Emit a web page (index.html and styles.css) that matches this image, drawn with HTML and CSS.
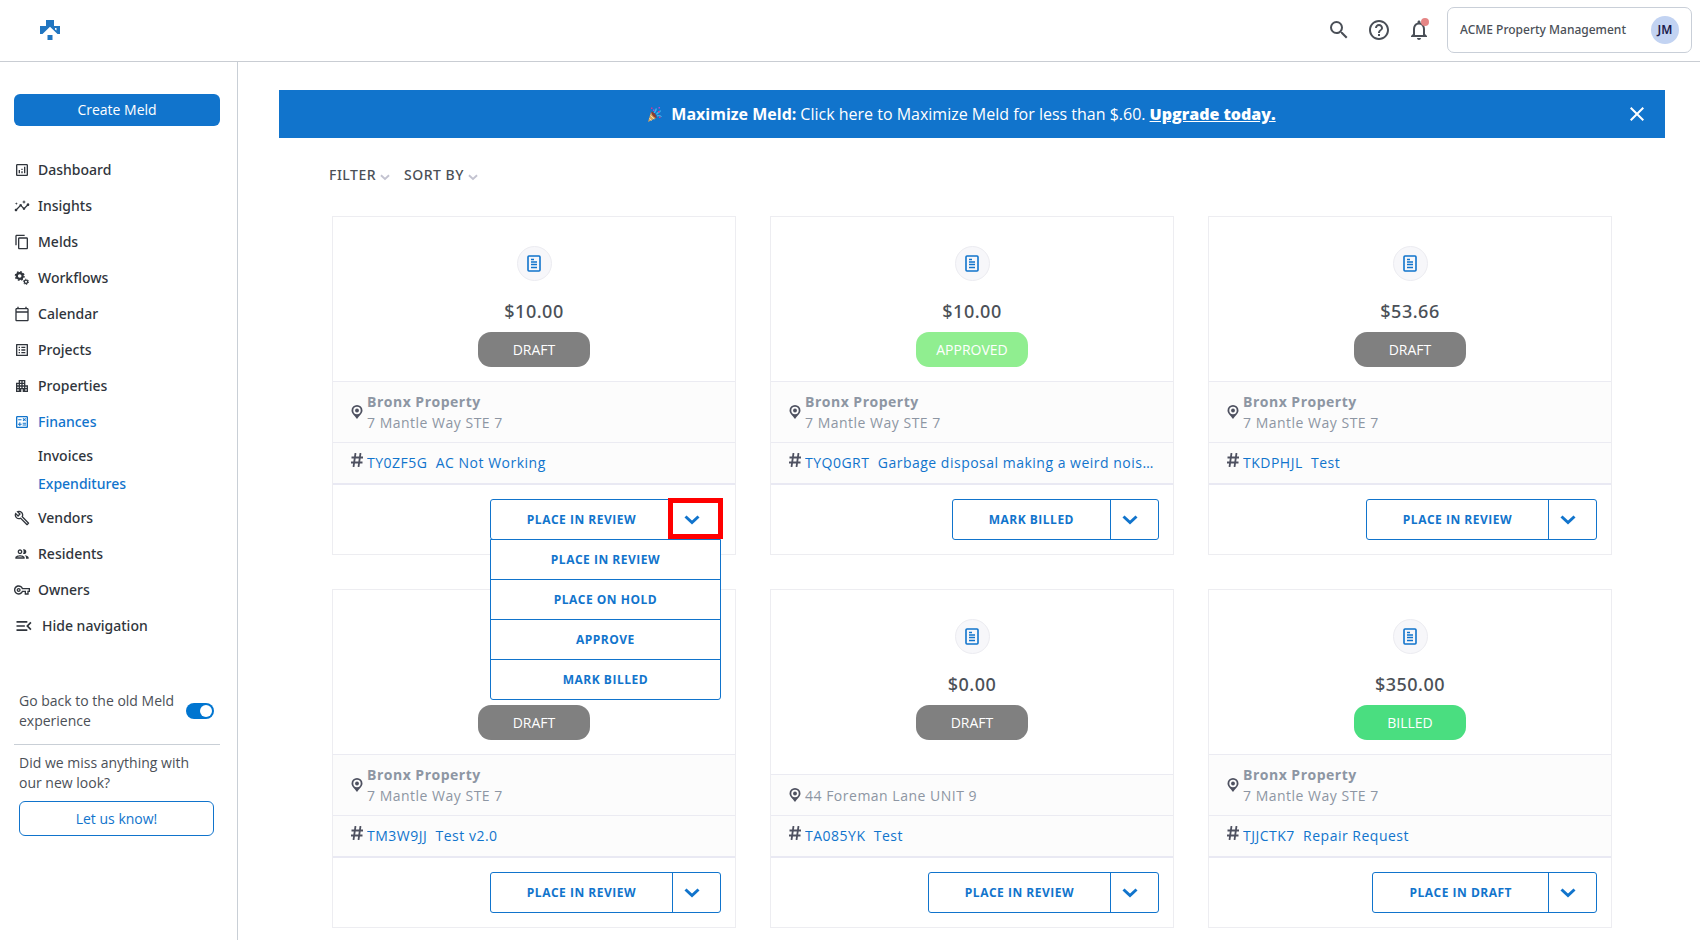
FILE: index.html
```html
<!DOCTYPE html>
<html lang="en">
	<head>
		<meta charset="UTF-8">
		<title>Expenditures</title>

		<link rel="stylesheet" href="styles.css">
	</head>

	<body>
		<svg class="symbols" aria-hidden="true">
			<symbol id="i-receipt" viewBox="0 0 14 18">
				<rect x="1" y="1" width="12" height="15" rx="1" fill="none" stroke="currentColor" stroke-width="1.6"/>
				<path d="M4 4.5h3M4 7h6M4 9.5h6M4 12.5h6" fill="none" stroke="currentColor" stroke-width="1.4"/>
			</symbol>
			<symbol id="i-pin" viewBox="0 0 12 14">
				<path fill-rule="evenodd" d="M6 0a5.500 5.500 0 0 0-5.500 5.500C.5 8.500 3.500 10.500 6 14c2.500-3.500 5.500-5.500 5.500-8.500A5.500 5.500 0 0 0 6 0zm0 1.800a3.700 3.700 0 1 1 0 7.400 3.700 3.700 0 0 1 0-7.400z" fill="currentColor"/>
				<circle cx="6" cy="5.500" r="1.900" fill="currentColor"/>
			</symbol>
			<symbol id="i-hash" viewBox="0 0 12 14">
				<path d="M4.500 0L2.500 14M9.500 0L7.500 14M.5 4.500H12M0 9.500h11.500" fill="none" stroke="currentColor" stroke-width="1.800"/>
			</symbol>
			<symbol id="i-chevron" viewBox="0 0 16 10">
				<path d="M1.500 1.500L8 7.500l6.500-6" fill="none" stroke="currentColor" stroke-width="3"/>
			</symbol>
		</svg>

		<header class="topbar">
			<a href="#" class="logo" aria-label="Home">
				<svg width="20" height="20" viewBox="0 0 20 20">
					<path d="M6 0h8v6h6v8h-2.500L10 6.800 2.500 14H0V6h6z" fill="#2176c1"/>
					<path d="M15 8h1.500v2.500L15 9.500z" fill="#fff"/>
					<rect x="7.500" y="15" width="5" height="5" fill="#2176c1"/>
				</svg>
			</a>
			<div class="tools">
				<button type="button" class="icon_button" aria-label="Search">
					<svg width="24" height="24" viewBox="0 0 24 24"><path d="M15.500 14h-.79l-.28-.27A6.471 6.471 0 0 0 16 9.500 6.500 6.500 0 1 0 9.500 16c1.610 0 3.090-.59 4.230-1.570l.27.28v.79l5 4.990L20.490 19l-4.990-5zm-6 0C7.010 14 5 11.990 5 9.500S7.010 5 9.500 5 14 7.010 14 9.500 11.990 14 9.500 14z"/></svg>
				</button>
				<button type="button" class="icon_button" aria-label="Help">
					<svg width="24" height="24" viewBox="0 0 24 24"><path d="M11 18h2v-2h-2v2zm1-16C6.480 2 2 6.480 2 12s4.480 10 10 10 10-4.480 10-10S17.520 2 12 2zm0 18c-4.410 0-8-3.590-8-8s3.590-8 8-8 8 3.590 8 8-3.590 8-8 8zm0-14c-2.210 0-4 1.790-4 4h2c0-1.100.9-2 2-2s2 .9 2 2c0 2-3 1.750-3 5h2c0-2.250 3-2.500 3-5 0-2.210-1.790-4-4-4z"/></svg>
				</button>
				<button type="button" class="icon_button bell" aria-label="Notifications">
					<svg width="24" height="24" viewBox="0 0 24 24"><path d="M12 22c1.100 0 2-.9 2-2h-4c0 1.100.9 2 2 2zm6-6v-5c0-3.070-1.630-5.640-4.500-6.320V4c0-.83-.67-1.500-1.500-1.500s-1.500.67-1.500 1.500v.68C7.640 5.360 6 7.920 6 11v5l-2 2v1h16v-1l-2-2zm-2 1H8v-6c0-2.480 1.510-4.500 4-4.500s4 2.020 4 4.500v6z"/></svg>
				</button>
				<button type="button" class="account">
					<span>ACME Property Management</span>
					<span class="avatar">JM</span>
				</button>
			</div>
		</header>

		<div class="page">
			<aside class="sidebar">
				<button type="button" class="create">Create Meld</button>

				<nav>
					<ul class="menu">
						<li><a href="#">
							<svg width="16" height="16" viewBox="0 0 24 24"><path d="M19 3H5c-1.100 0-2 .9-2 2v14c0 1.100.9 2 2 2h14c1.100 0 2-.9 2-2V5c0-1.100-.9-2-2-2zm0 16H5V5h14v14zM7 12h2v5H7zM15 7h2v10h-2zM11 14h2v3h-2zM11 10h2v2h-2z"/></svg>
							Dashboard
						</a></li>
						<li><a href="#">
							<svg width="16" height="16" viewBox="0 0 24 24"><path d="M21 8c-1.450 0-2.260 1.440-1.930 2.510l-3.550 3.560c-.3-.09-.74-.09-1.040 0l-2.550-2.550C12.270 10.450 11.460 9 10 9c-1.450 0-2.270 1.440-1.930 2.520l-4.560 4.550C2.440 15.740 1 16.550 1 18c0 1.100.9 2 2 2 1.450 0 2.260-1.440 1.930-2.510l4.550-4.560c.3.09.74.09 1.040 0l2.550 2.550C12.730 16.550 13.540 18 15 18c1.450 0 2.270-1.440 1.930-2.520l3.560-3.550C21.560 12.260 23 11.450 23 10c0-1.100-.9-2-2-2zM15 9l.94-2.070L18 6l-2.060-.93L15 3l-.92 2.070L12 6l2.080.93zM3.500 11L4 9l2-.5L4 8l-.5-2L3 8l-2 .5L3 9z"/></svg>
							Insights
						</a></li>
						<li><a href="#">
							<svg width="16" height="16" viewBox="0 0 24 24"><path d="M16 1H4c-1.100 0-2 .9-2 2v14h2V3h12V1zm3 4H8c-1.100 0-2 .9-2 2v14c0 1.100.9 2 2 2h11c1.100 0 2-.9 2-2V7c0-1.100-.9-2-2-2zm0 16H8V7h11v14z"/></svg>
							Melds
						</a></li>
						<li><a href="#">
							<svg width="16" height="16" viewBox="0 0 16 16">
								<g fill="none" stroke="currentColor">
									<circle cx="5.700" cy="6" r="2.900" stroke-width="2.200"/>
									<circle cx="5.700" cy="6" r="4.300" stroke-width="1.400" stroke-dasharray="1.700 1.677"/>
									<circle cx="12" cy="11.800" r="1.700" stroke-width="1.300"/>
									<circle cx="12" cy="11.800" r="2.600" stroke-width="1" stroke-dasharray="1.300 1.422"/>
								</g>
							</svg>
							Workflows
						</a></li>
						<li><a href="#">
							<svg width="16" height="16" viewBox="0 0 24 24"><path d="M20 3h-1V1h-2v2H7V1H5v2H4c-1.100 0-2 .9-2 2v16c0 1.100.9 2 2 2h16c1.100 0 2-.9 2-2V5c0-1.100-.9-2-2-2zm0 18H4V10h16v11zm0-13H4V5h16v3z"/></svg>
							Calendar
						</a></li>
						<li><a href="#">
							<svg width="16" height="16" viewBox="0 0 24 24"><path d="M19 5v14H5V5h14m1.100-2H3.900c-.5 0-.9.4-.9.9v16.200c0 .4.4.9.9.9h16.200c.4 0 .9-.5.9-.9V3.900c0-.5-.5-.9-.9-.9zM11 7h6v2h-6V7zm0 4h6v2h-6v-2zm0 4h6v2h-6zM7 7h2v2H7zm0 4h2v2H7zm0 4h2v2H7z"/></svg>
							Projects
						</a></li>
						<li><a href="#">
							<svg width="16" height="16" viewBox="0 0 24 24"><path d="M17 11V3H7v4H3v14h8v-4h2v4h8V11h-4zM7 19H5v-2h2v2zm0-4H5v-2h2v2zm0-4H5V9h2v2zm4 4H9v-2h2v2zm0-4H9V9h2v2zm0-4H9V5h2v2zm4 8h-2v-2h2v2zm0-4h-2V9h2v2zm0-4h-2V5h2v2zm4 12h-2v-2h2v2zm0-4h-2v-2h2v2z"/></svg>
							Properties
						</a></li>
						<li>
							<a href="#" class="active">
								<svg width="16" height="16" viewBox="0 0 24 24"><path d="M19 3H5c-1.100 0-2 .9-2 2v14c0 1.100.9 2 2 2h14c1.100 0 2-.9 2-2V5c0-1.100-.9-2-2-2zm0 16H5V5h14v14zM6.250 7.720h5v1.500h-5zM13 15.750h5v1.500h-5zM13 13.250h5v1.500h-5zM8 18h1.500v-2h2v-1.500h-2v-2H8v2H6V16h2zM14.090 10.950l1.410-1.410 1.410 1.410 1.060-1.060-1.410-1.420 1.410-1.410L16.910 6 15.500 7.410 14.090 6l-1.060 1.060 1.410 1.410-1.410 1.420z"/></svg>
								Finances
							</a>
							<ul class="submenu">
								<li><a href="#">Invoices</a></li>
								<li><a href="#" class="active">Expenditures</a></li>
							</ul>
						</li>
						<li><a href="#">
							<svg width="16" height="16" viewBox="0 0 24 24"><path d="M22.610 18.990l-9.080-9.080c.93-2.340.45-5.100-1.440-7C9.790.61 6.210.4 3.660 2.260L7.500 6.110 6.080 7.520 2.250 3.690C.39 6.230.6 9.820 2.900 12.110c1.860 1.860 4.570 2.350 6.890 1.480l9.110 9.110c.39.39 1.020.39 1.410 0l2.300-2.300c.4-.38.4-1.010 0-1.410zm-3 1.600l-9.460-9.460c-.61.45-1.290.72-2 .82-1.360.2-2.790-.21-3.830-1.250C3.370 9.760 2.930 8.500 3 7.260l3.090 3.090 4.240-4.240-3.090-3.090c1.240-.07 2.490.37 3.440 1.310 1.080 1.080 1.490 2.570 1.240 3.960-.12.71-.42 1.370-.88 1.960l9.450 9.450-.88.89z"/></svg>
							Vendors
						</a></li>
						<li><a href="#">
							<svg width="16" height="16" viewBox="0 0 24 24"><path d="M9 13.750c-2.340 0-7 1.170-7 3.500V19h14v-1.750c0-2.330-4.660-3.500-7-3.500zM4.340 17c.84-.58 2.870-1.250 4.660-1.250s3.820.67 4.660 1.250H4.340zM9 12c1.930 0 3.500-1.570 3.500-3.500S10.930 5 9 5 5.500 6.570 5.500 8.500 7.070 12 9 12zm0-5c.83 0 1.500.67 1.500 1.500S9.830 10 9 10s-1.500-.67-1.500-1.500S8.170 7 9 7zm7.040 6.810c1.160.84 1.960 1.960 1.960 3.440V19h4v-1.750c0-2.020-3.500-3.170-5.960-3.440zM15 12c1.930 0 3.500-1.570 3.500-3.500S16.930 5 15 5c-.54 0-1.040.13-1.500.35.63.89 1 1.980 1 3.150s-.37 2.260-1 3.150c.46.22.96.35 1.500.35z"/></svg>
							Residents
						</a></li>
						<li><a href="#">
							<svg width="16" height="16" viewBox="0 0 24 24"><path d="M22 19h-6v-4h-2.680c-1.140 2.420-3.600 4-6.320 4-3.860 0-7-3.140-7-7s3.140-7 7-7c2.720 0 5.170 1.580 6.320 4H24v6h-2v4zm-4-2h2v-4h2v-2H11.940l-.23-.67C11.010 8.340 9.110 7 7 7c-2.760 0-5 2.240-5 5s2.240 5 5 5c2.110 0 4.010-1.340 4.710-3.330l.23-.67H18v4zM7 15c-1.650 0-3-1.350-3-3s1.350-3 3-3 3 1.350 3 3-1.350 3-3 3zm0-4c-.55 0-1 .45-1 1s.45 1 1 1 1-.45 1-1-.45-1-1-1z"/></svg>
							Owners
						</a></li>
						<li><a href="#">
							<svg width="20" height="20" viewBox="0 0 24 24"><path d="M3 18h13v-2H3v2zm0-5h10v-2H3v2zm0-7v2h13V6H3zm18 9.590L17.420 12 21 8.410 19.590 7l-5 5 5 5L21 15.590z"/></svg>
							Hide navigation
						</a></li>
					</ul>
				</nav>

				<div class="switch">
					<label for="old">Go back to the old Meld experience</label>
					<input type="checkbox" id="old" checked>
				</div>
				<div class="feedback">
					<p>Did we miss anything with our new look?</p>
					<button type="button">Let us know!</button>
				</div>
			</aside>

			<main>
				<div class="banner">
					<p>
						<svg width="16" height="16" viewBox="0 0 14 16">
							<path d="M3 6l5 6-8 4z" fill="#d9a35b"/>
							<path d="M3.500 5.500C6 6 8.500 9 8.500 12 5.500 11.500 3 8.500 3.500 5.500z" fill="#8c3b32"/>
							<path d="M2.300 9.500l4 3.500M1.300 12.500l2.200 2" stroke="#f4e3b0" fill="none"/>
							<path d="M6.500 7c0-2 2-2 1.500-4.500M8.500 8.500c1-2.500 3-1.500 4-4" stroke="#3cb4f0" stroke-width="1.500" fill="none"/>
							<path d="M3 1.500h1.500v1.500H3zM10 5h1.500v1.500H10zM11 10.500h1.500V12H11z" fill="#e0318c"/>
							<path d="M5 3.500h1.500V5H5zM10.500 1H12v1.500h-1.500z" fill="#b04bd0"/>
							<path d="M9 10c1.500-.5 3-.5 4.500.5" stroke="#58c8f4" fill="none"/>
						</svg>
						<b>Maximize Meld:</b> Click here to Maximize Meld for less than $.60. <a href="#">Upgrade today.</a>
					</p>
					<button type="button" aria-label="Close">
						<svg width="14" height="14" viewBox="0 0 14 14"><path d="M.7.7l12.600 12.600M13.300.7L.7 13.300" stroke="currentColor" stroke-width="2"/></svg>
					</button>
				</div>

				<div class="filters">
					<button type="button">FILTER <svg width="10" height="7"><use href="#i-chevron"/></svg></button>
					<button type="button">SORT BY <svg width="10" height="7"><use href="#i-chevron"/></svg></button>
				</div>

				<div class="cards">
					<article class="card">
						<div class="summary">
							<span class="receipt"><svg width="14" height="18"><use href="#i-receipt"/></svg></span>
							<p class="amount">$10.00</p>
							<span class="status">DRAFT</span>
						</div>
						<div class="row place">
							<svg width="12" height="14"><use href="#i-pin"/></svg>
							<p><b>Bronx Property</b><br>7 Mantle Way STE 7</p>
						</div>
						<div class="row meld">
							<svg width="12" height="14"><use href="#i-hash"/></svg>
							<a href="#">TY0ZF5G&nbsp; AC Not Working</a>
						</div>
						<div class="actions">
							<div class="split open">
								<button type="button" class="action">PLACE IN REVIEW</button>
								<button type="button" class="more" aria-label="More actions" aria-expanded="true"><svg width="16" height="10"><use href="#i-chevron"/></svg></button>
								<div class="dropdown">
									<button type="button">PLACE IN REVIEW</button>
									<button type="button">PLACE ON HOLD</button>
									<button type="button">APPROVE</button>
									<button type="button">MARK BILLED</button>
								</div>
							</div>
						</div>
					</article>

					<article class="card">
						<div class="summary">
							<span class="receipt"><svg width="14" height="18"><use href="#i-receipt"/></svg></span>
							<p class="amount">$10.00</p>
							<span class="status approved">APPROVED</span>
						</div>
						<div class="row place">
							<svg width="12" height="14"><use href="#i-pin"/></svg>
							<p><b>Bronx Property</b><br>7 Mantle Way STE 7</p>
						</div>
						<div class="row meld">
							<svg width="12" height="14"><use href="#i-hash"/></svg>
							<a href="#">TYQ0GRT&nbsp; Garbage disposal making a weird nois...</a>
						</div>
						<div class="actions">
							<div class="split">
								<button type="button" class="action">MARK BILLED</button>
								<button type="button" class="more" aria-label="More actions"><svg width="16" height="10"><use href="#i-chevron"/></svg></button>
							</div>
						</div>
					</article>

					<article class="card">
						<div class="summary">
							<span class="receipt"><svg width="14" height="18"><use href="#i-receipt"/></svg></span>
							<p class="amount">$53.66</p>
							<span class="status">DRAFT</span>
						</div>
						<div class="row place">
							<svg width="12" height="14"><use href="#i-pin"/></svg>
							<p><b>Bronx Property</b><br>7 Mantle Way STE 7</p>
						</div>
						<div class="row meld">
							<svg width="12" height="14"><use href="#i-hash"/></svg>
							<a href="#">TKDPHJL&nbsp; Test</a>
						</div>
						<div class="actions">
							<div class="split">
								<button type="button" class="action">PLACE IN REVIEW</button>
								<button type="button" class="more" aria-label="More actions"><svg width="16" height="10"><use href="#i-chevron"/></svg></button>
							</div>
						</div>
					</article>

					<article class="card">
						<div class="summary">
							<span class="receipt"><svg width="14" height="18"><use href="#i-receipt"/></svg></span>
							<p class="amount">&nbsp;</p>
							<span class="status">DRAFT</span>
						</div>
						<div class="row place">
							<svg width="12" height="14"><use href="#i-pin"/></svg>
							<p><b>Bronx Property</b><br>7 Mantle Way STE 7</p>
						</div>
						<div class="row meld">
							<svg width="12" height="14"><use href="#i-hash"/></svg>
							<a href="#">TM3W9JJ&nbsp; Test v2.0</a>
						</div>
						<div class="actions">
							<div class="split">
								<button type="button" class="action">PLACE IN REVIEW</button>
								<button type="button" class="more" aria-label="More actions"><svg width="16" height="10"><use href="#i-chevron"/></svg></button>
							</div>
						</div>
					</article>

					<article class="card">
						<div class="summary">
							<span class="receipt"><svg width="14" height="18"><use href="#i-receipt"/></svg></span>
							<p class="amount">$0.00</p>
							<span class="status">DRAFT</span>
						</div>
						<div class="row place">
							<svg width="12" height="14"><use href="#i-pin"/></svg>
							<p>44 Foreman Lane UNIT 9</p>
						</div>
						<div class="row meld">
							<svg width="12" height="14"><use href="#i-hash"/></svg>
							<a href="#">TA085YK&nbsp; Test</a>
						</div>
						<div class="actions">
							<div class="split">
								<button type="button" class="action">PLACE IN REVIEW</button>
								<button type="button" class="more" aria-label="More actions"><svg width="16" height="10"><use href="#i-chevron"/></svg></button>
							</div>
						</div>
					</article>

					<article class="card">
						<div class="summary">
							<span class="receipt"><svg width="14" height="18"><use href="#i-receipt"/></svg></span>
							<p class="amount">$350.00</p>
							<span class="status billed">BILLED</span>
						</div>
						<div class="row place">
							<svg width="12" height="14"><use href="#i-pin"/></svg>
							<p><b>Bronx Property</b><br>7 Mantle Way STE 7</p>
						</div>
						<div class="row meld">
							<svg width="12" height="14"><use href="#i-hash"/></svg>
							<a href="#">TJJCTK7&nbsp; Repair Request</a>
						</div>
						<div class="actions">
							<div class="split">
								<button type="button" class="action">PLACE IN DRAFT</button>
								<button type="button" class="more" aria-label="More actions"><svg width="16" height="10"><use href="#i-chevron"/></svg></button>
							</div>
						</div>
					</article>
				</div>
			</main>
		</div>
	</body>
</html>
```

FILE: styles.css
```css
*, *::before, *::after {
    box-sizing: border-box;
}

body {
    margin: 0;
    min-height: 100vh;
    display: flex; flex-direction: column;
    font-family: "Open Sans", "Noto Sans", sans-serif;
    font-size: 14px;
    line-height: 20px;
    color: #4b5057;
    background: #fff;
}

p, ul {
    margin: 0; padding: 0;
    list-style: none;
}

a {
    color: inherit;
    text-decoration: none;
}

button {
    padding: 0;
    border: 0;
    background: none;
    font: inherit;
    letter-spacing: inherit;
    color: inherit;
    cursor: pointer;
}

svg {
    flex: none;
    display: block;
    fill: currentColor;
}

svg.symbols {
    position: absolute;
    width: 0; height: 0;
}

/* top bar */

.topbar {
    height: 62px;
    padding: 0 8px 1px 40px;
    border-bottom: 1px solid #c9cdd3;
    display: flex;
    align-items: center;
    justify-content: space-between;
}

.tools {
    display: flex;
    align-items: center;
    gap: 16px;
    color: #4a4f57;
}

.bell {
    position: relative;
}

.bell::after {
    content: "";
    position: absolute; top: 0; right: 2px;
    width: 8px; height: 8px;
    border-radius: 50%;
    background: #e58585;
}

.account {
    height: 46px;
    padding: 0 12px;
    border: 1px solid #c9cfd8;
    border-radius: 7px;
    display: flex;
    align-items: center;
    gap: 25px;
    font-family: "Noto Sans", sans-serif;
    font-size: 12px;
    font-weight: 500;
}

.avatar {
    width: 28px;
    border-radius: 50%;
    background: #c2d3f2;
    color: #1c1a4b;
    font-weight: 600;
    line-height: 28px;
    text-align: center;
}

/* side bar */

.page {
    flex: 1;
    display: flex;
}

.sidebar {
    flex: none;
    width: 238px;
    padding: 32px 17px 0 14px;
    border-right: 1px solid #c9cfd6;
}

.create {
    width: 100%;
    height: 32px;
    border-radius: 6px;
    background: #1174cc;
    color: #fff;
}

.menu {
    margin-top: 26px;
    color: #30353c;
    font-family: "Noto Sans", sans-serif;
    font-weight: 500;
}

.menu a {
    height: 36px;
    display: flex;
    align-items: center;
    gap: 8px;
}

.menu a.active {
    color: #1174cc;
}

.submenu {
    padding: 2px 0 2px 24px;
}

.submenu a {
    height: 28px;
}

.switch {
    margin-top: 47px;
    padding: 0 6px 13px 5px;
    border-bottom: 1px solid #c9cfd6;
    display: flex;
    align-items: center;
    justify-content: space-between;
}

.switch label {
    flex: 0 1 160px;
}

.switch input {
    appearance: none;
    flex: none;
    width: 28px; height: 16px;
    margin: 0; padding: 2px;
    border-radius: 8px;
    background: #9aa1ab;
}

.switch input::before {
    content: "";
    display: block;
    width: 12px; height: 12px;
    border-radius: 50%;
    background: #fff;
}

.switch input:checked {
    background: #0075d0;
}

.switch input:checked::before {
    margin-left: auto;
}

.feedback {
    padding: 8px 6px 0 5px;
}

.feedback button {
    width: 100%;
    height: 35px;
    margin-top: 8px;
    border: 1px solid #1174cc;
    border-radius: 6px;
    color: #1174cc;
}

/* content */

main {
    flex: 1;
    min-width: 0;
    padding: 28px 35px 11px 41px;
}

.banner {
    height: 48px;
    padding: 0 21px 0 14px;
    background: #1174cc;
    color: #fff;
    font-size: 16px;
    display: flex;
    align-items: center;
}

.banner p {
    flex: 1;
    display: flex;
    align-items: center;
    justify-content: center;
    gap: 4px;
}

.banner p svg {
    margin-right: 4px;
}

.banner a {
    font-weight: 800;
    text-decoration: underline;
}

.filters {
    padding: 27px 50px 0;
    display: flex;
    gap: 14px;
    font-family: "Noto Sans", sans-serif;
    font-weight: 500;
    letter-spacing: .5px;
}

.filters button {
    display: flex;
    align-items: center;
    gap: 4px;
}

.filters svg {
    margin-top: 4px;
    color: #c3c3d0;
}

.cards {
    margin: 31px 53px 0;
    display: grid;
    grid-template-columns: repeat(3, minmax(0, 1fr));
    gap: 34px;
}

.card {
    border: 1px solid #ededf1;
    background: #fff;
    display: flex; flex-direction: column;
}

.summary {
    flex: 1;
    padding: 29px 0 14px;
    display: flex; flex-direction: column;
    align-items: center;
}

.receipt {
    width: 35px; height: 35px;
    border: 1px solid #ececf1;
    border-radius: 50%;
    background: #f7f7fa;
    color: #1174cc;
    display: flex;
    align-items: center;
    justify-content: center;
}

.amount {
    margin: 18px 0 9px;
    font-family: "Noto Sans", sans-serif;
    font-size: 18px;
    font-weight: 500;
    line-height: 24px;
    letter-spacing: .5px;
}

.status {
    width: 112px;
    border-radius: 13px;
    background: #808080;
    color: #fff;
    line-height: 35px;
    text-align: center;
}

.status.approved {
    background: #90ee90;
}

.status.billed {
    background: #4ade80;
}

.row {
    padding: 0 18px;
    border-top: 1px solid #ebebf2;
    background: #fcfcfc;
    display: flex;
    gap: 4px;
    letter-spacing: .5px;
}

.row svg {
    color: #4e5160;
}

.place {
    min-height: 41px;
    padding-top: 9px;
    padding-bottom: 9px;
    align-items: center;
    color: #8d96a3;
    line-height: 21px;
}

.meld {
    padding-top: 10px;
    padding-bottom: 10px;
    border-bottom: 2px solid #e9e9f3;
    color: #1174cc;
}

.meld a {
    overflow: hidden;
    text-overflow: ellipsis;
    white-space: nowrap;
}

.actions {
    padding: 14px;
    display: flex;
    justify-content: flex-end;
}

.split {
    position: relative;
    height: 41px;
    border: 1px solid #1174cc;
    border-radius: 3px;
    display: flex;
    color: #1174cc;
    font-size: 12px;
    font-weight: 700;
    letter-spacing: .5px;
}

.action {
    padding: 0 36px;
}

.more {
    width: 48px;
    padding-left: 11px;
    border-left: 1px solid #1174cc;
}

/* menu hangs from the bottom border of its button */
.dropdown {
    position: absolute; top: 39px; right: -1px; left: -1px;
    z-index: 1;
    border: 1px solid #1174cc;
    border-radius: 0 0 3px 3px;
    background: #fff;
}

.dropdown button {
    display: block;
    width: 100%;
    height: 40px;
    border-bottom: 1px solid #1174cc;
}

.dropdown button:last-child {
    height: 39px;
    border-bottom: 0;
}

.open::after {
    content: "";
    position: absolute; top: -2px; right: -3px;
    z-index: 2;
    width: 55px; height: 41px;
    border: 5px solid #f00;
    pointer-events: none;
}

.open .more {
    border-left-color: transparent;
}
```
